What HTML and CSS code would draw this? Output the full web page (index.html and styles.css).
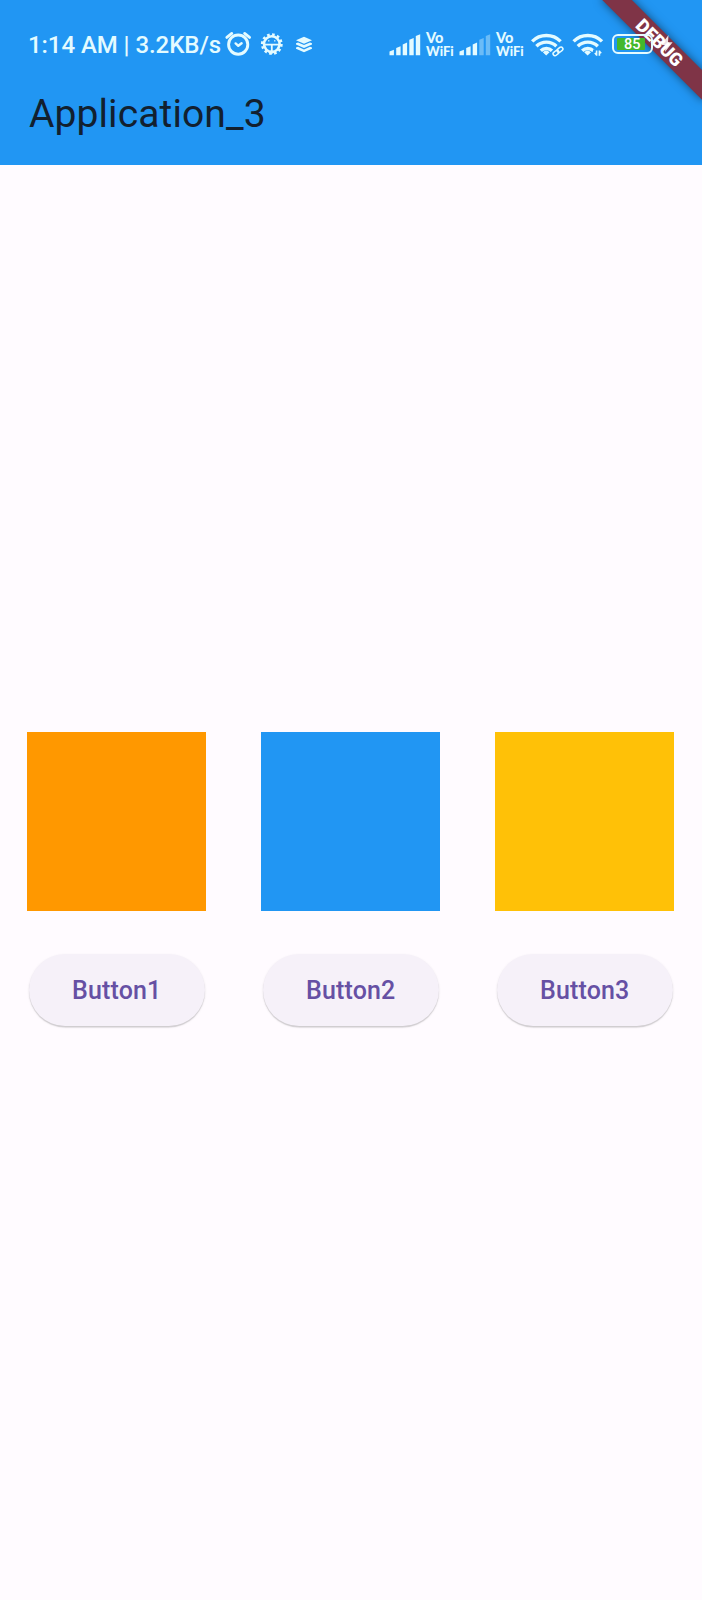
FILE: index.html
```html
<!DOCTYPE html>
<html lang="en">
<head>
<meta charset="utf-8">
<title>Application_3</title>
<link rel="stylesheet" href="styles.css">
</head>
<body>
<div class="screen">
  <header class="appbar">
    <div class="status">
      <span class="clock">1:14 AM | 3.2KB/s</span>
      <svg class="left-icons" width="90" height="30" viewBox="224 30 90 30">
        <g fill="none" stroke="#e4fbff" stroke-linecap="round" stroke-linejoin="round">
          <circle cx="238.2" cy="44.6" r="9.6" stroke-width="2.9"/>
          <path d="M226.8 37.4l5-4M249.6 37.4l-5-4" stroke-width="2.8"/>
          <path d="M235.6 43.4l2.7 2.4 3.3-2.6" stroke-width="2.4"/>
          <circle cx="271.8" cy="44.1" r="7.8" stroke-width="2.6"/>
          <circle cx="271.8" cy="44.1" r="9.6" stroke-width="2.6" stroke-linecap="butt" stroke-dasharray="2.6 2.426"/>
          <path d="M265 44.6h13.6M271.8 45v8" stroke-width="1.8"/>
          <path d="M268.8 40.7v.2M274.8 40.7v.2" stroke-width="1.4"/>
        </g>
        <g fill="#e4fbff">
          <path d="M304 36.8l8 3.5-8 3.5-8-3.5z"/>
          <path d="M296 43.2l2-.8 6 2.6 6-2.6 2 .8v1.4l-8 3.5-8-3.5z"/>
          <path d="M296 47.6l2-.8 6 2.6 6-2.6 2 .8v1.2l-8 3.5-8-3.5z"/>
        </g>
      </svg>
      <div class="sim">
        <svg width="32" height="22" viewBox="0 0 32 22" fill="#e4fbff">
          <path d="M.5 17.4l4.4-1.6v5.5H.5zM7.2 14l4.4-1.8v9.1H7.2zM13.7 10.4l4.4-1.8v12.7h-4.4zM20.3 5.8l4.4-1.8v17.3h-4.4zM26.8 2L31.2.2v21.1h-4.4z"/>
        </svg>
        <div class="vowifi"><span class="vo">Vo</span><span class="wf">WiFi</span></div>
      </div>
      <div class="sim">
        <svg width="32" height="22" viewBox="0 0 32 22" fill="#e4fbff">
          <path d="M.5 17.4l4.4-1.6v5.5H.5zM7.2 14l4.4-1.8v9.1H7.2zM13.7 10.4l4.4-1.8v12.7h-4.4z"/>
          <path opacity=".38" d="M20.3 5.8l4.4-1.8v17.3h-4.4zM26.8 2L31.2.2v21.1h-4.4z"/>
        </svg>
        <div class="vowifi"><span class="vo">Vo</span><span class="wf">WiFi</span></div>
      </div>
      <svg class="right-icons" width="76" height="30" viewBox="530 30 76 30">
        <g fill="none" stroke="#e4fbff" stroke-width="3.4">
          <path d="M532.2 41.4a20 20 0 0 1 28.4 0"/>
          <path d="M536.4 46.2a14.2 14.2 0 0 1 20 0"/>
          <path d="M540.8 50.8a8 8 0 0 1 11.2 0"/>
          <path d="M573.6 41.4a20 20 0 0 1 28.4 0"/>
          <path d="M577.8 46.2a14.2 14.2 0 0 1 20 0"/>
          <path d="M582.2 50.8a8 8 0 0 1 11.2 0"/>
        </g>
        <path d="M542.8 52.2a5 5 0 0 1 6.8 0l-3.4 3.4zM584.2 52.2a5 5 0 0 1 6.8 0l-3.4 3.4z" fill="#e4fbff"/>
        <path d="M552.5 54.5l10-6.5" fill="none" stroke="#2196f3" stroke-width="4"/>
        <g fill="none" stroke="#e4fbff" stroke-width="1.5">
          <rect x="-3.2" y="-1.9" width="6.4" height="3.8" rx="1.9" transform="translate(556 53) rotate(-40)"/>
          <rect x="-3.2" y="-1.9" width="6.4" height="3.8" rx="1.9" transform="translate(560 49.7) rotate(-40)"/>
        </g>
        <path d="M593 49.5h10v8h-10z" fill="#2196f3"/>
        <path d="M596.6 50.4v5.4M599.4 55.8v-5.4M596.6 55l-1.8-2M599.4 51.2l1.8 2" fill="none" stroke="#e4fbff" stroke-width="1.6"/>
      </svg>
      <div class="battery"><span class="level">85</span></div>
      <svg class="bolt" width="12" height="18" viewBox="0 0 12 18"><path d="M7.5 0L0 10h4.8L4 17l7.6-9.8H7z" fill="#fff" fill-opacity=".85"/></svg>
    </div>
    <h1 class="title">Application_3</h1>
  </header>
  <main class="content">
    <section class="item"><div class="box orange"></div><button class="btn">Button1</button></section>
    <section class="item"><div class="box blue"></div><button class="btn">Button2</button></section>
    <section class="item"><div class="box amber"></div><button class="btn">Button3</button></section>
  </main>
  <div class="banner">DEBUG</div>
</div>
</body>
</html>
```
FILE: styles.css
```css
* { box-sizing: border-box; }
body { margin: 0; font-family: Roboto, "Liberation Sans", sans-serif; }
.screen { position: relative; width: 702px; height: 1600px; overflow: hidden; background: #fffbff; }
.appbar { height: 165px; background: #2196f3; padding-top: 30px; }
.status { position: relative; z-index: 2; display: flex; height: 30px; padding-left: 28px; color: #e4fbff; }
.clock { width: 196px; font-size: 24px; font-weight: 500; line-height: 30px; letter-spacing: -.06px; white-space: nowrap; }
.left-icons { flex: none; margin-right: 75px; }
.sim { display: flex; flex: none; width: 70px; padding-top: 4px; }
.sim svg { flex: none; }
.vowifi { display: flex; flex-direction: column; margin: -3px 0 0 5px; font-family: Lato, sans-serif; font-weight: 900; }
.vo { font-size: 14.5px; line-height: 14px; }
.wf { font-size: 13px; line-height: 13px; }
.right-icons { flex: none; margin-left: 1px; }
.battery { flex: none; width: 41px; height: 20px; margin: 4px 0 0 6px; border: 2px solid #e4fbff; border-radius: 6px; padding: 2px 3px; }
.level { display: block; width: 28px; height: 12px; background: #43b82c; border-radius: 1px; color: #fff; font-size: 14.5px; font-weight: 500; line-height: 13px; padding-left: 7px; }
.bolt { flex: none; margin: 5px 0 0 8px; }
.title { margin: 29px 0 0 29px; font-size: 39px; font-weight: 400; line-height: 51px; letter-spacing: .1px; color: #12202f; }
.content { display: grid; grid-template-columns: repeat(3, 234px); padding-top: 567px; margin-left: -.3px; }
.item { display: flex; flex-direction: column; align-items: center; gap: 43px; }
.box { width: 179px; height: 179px; }
.orange { background: #ff9800; }
.blue { background: #2196f3; }
.amber { background: #ffc107; }
.btn { width: 176px; height: 72px; border: 0; border-radius: 36px; padding: 1px 0 0; background: #f6f1f9; color: #6650a4; font: 500 25px/71px Roboto, sans-serif; letter-spacing: .14px; box-shadow: 0 1.5px 1px rgba(0,0,0,.15), 0 1px 3px rgba(0,0,0,.07); }
.banner { position: absolute; z-index: 1; left: 587.5px; top: 32.3px; width: 143px; height: 21.4px; transform: rotate(45deg); background: #7f3447; box-shadow: 0 0 10px rgba(0,0,0,.5); color: #fff; font-size: 18.2px; font-weight: 900; line-height: 21.4px; text-align: center; }
```
